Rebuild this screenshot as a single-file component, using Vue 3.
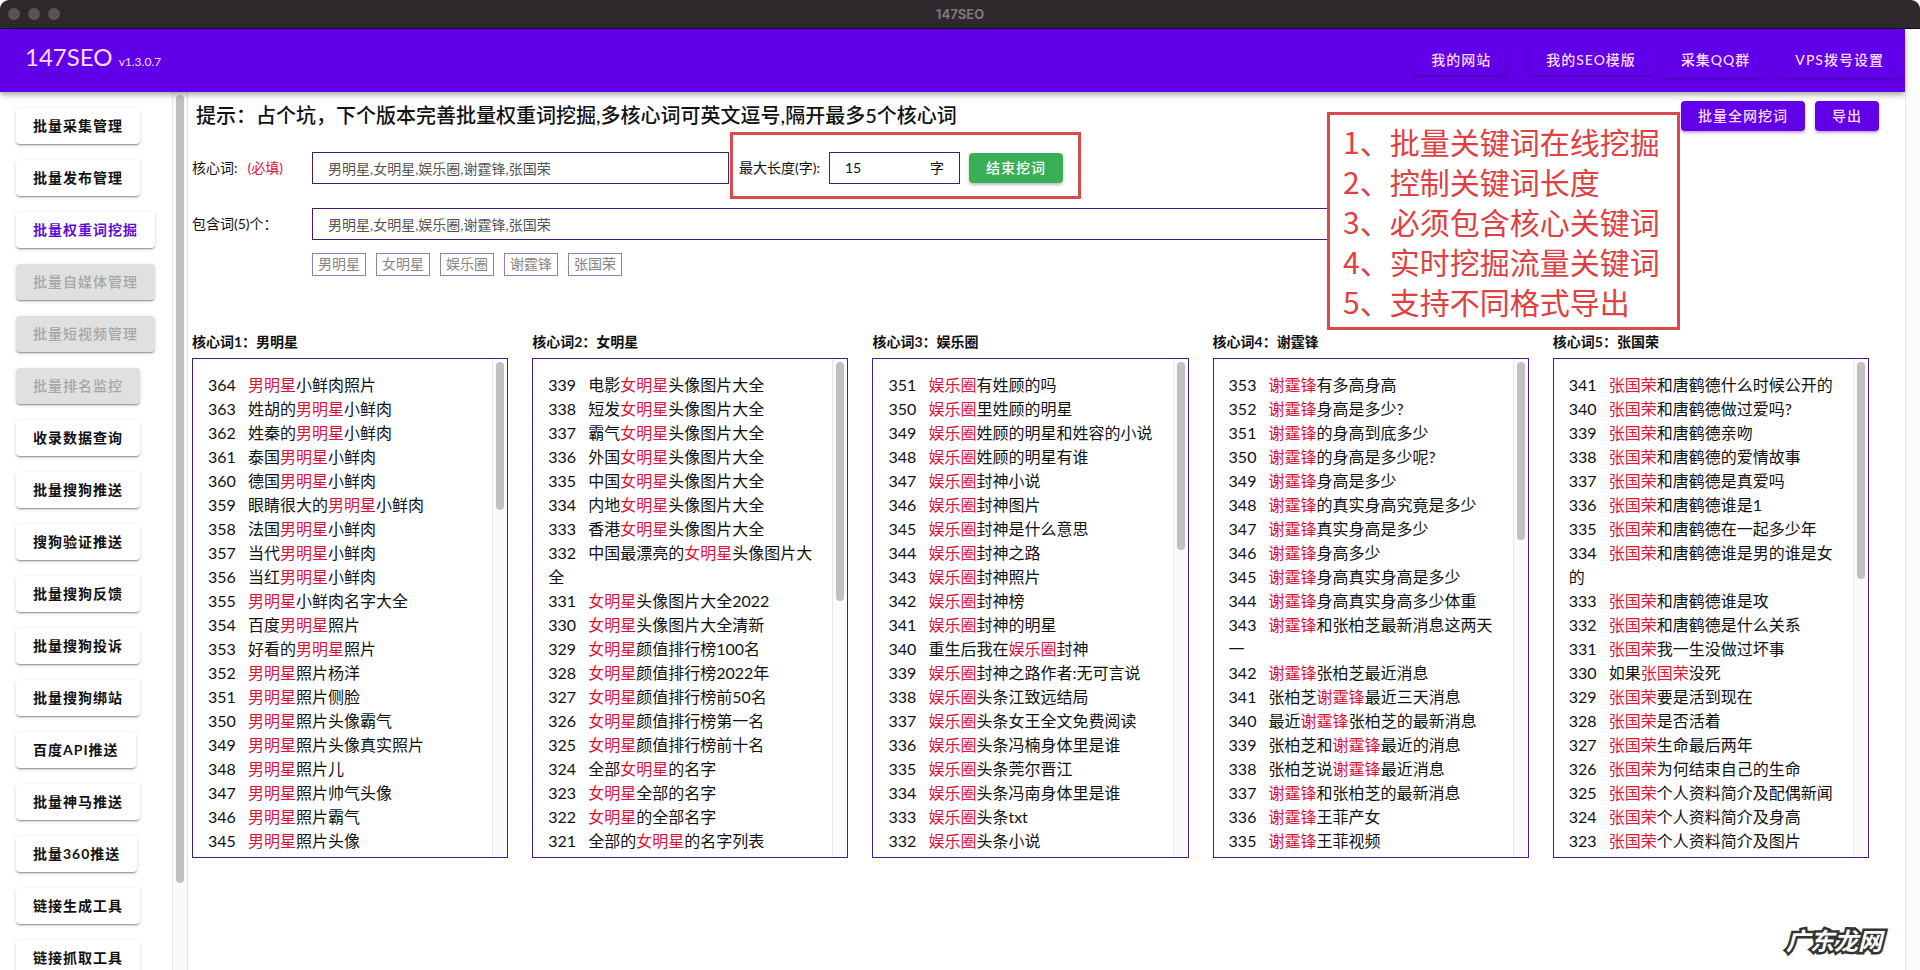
<script setup>
const navItems = [
  { label: '我的网站', kind: 'link wide-gap' },
  { label: '我的SEO模版', kind: 'link' },
  { label: '采集QQ群', kind: 'tall' },
  { label: 'VPS拨号设置', kind: 'tall' },
]

const sideItems = [
  { label: '批量采集管理' },
  { label: '批量发布管理' },
  { label: '批量权重词挖掘', active: true },
  { label: '批量自媒体管理', disabled: true },
  { label: '批量短视频管理', disabled: true },
  { label: '批量排名监控', disabled: true },
  { label: '收录数据查询' },
  { label: '批量搜狗推送' },
  { label: '搜狗验证推送' },
  { label: '批量搜狗反馈' },
  { label: '批量搜狗投诉' },
  { label: '批量搜狗绑站' },
  { label: '百度API推送' },
  { label: '批量神马推送' },
  { label: '批量360推送' },
  { label: '链接生成工具' },
  { label: '链接抓取工具' },
]

const keywords = ['男明星', '女明星', '娱乐圈', '谢霆锋', '张国荣']
const keywordText = keywords.join(',')

const notes = [
  '1、批量关键词在线挖掘',
  '2、控制关键词长度',
  '3、必须包含核心关键词',
  '4、实时挖掘流量关键词',
  '5、支持不同格式导出',
]

const sources = [
  {
    start: 364, thumb: 148,
    rows: ['男明星小鲜肉照片', '姓胡的男明星小鲜肉', '姓秦的男明星小鲜肉', '泰国男明星小鲜肉', '德国男明星小鲜肉', '眼睛很大的男明星小鲜肉', '法国男明星小鲜肉', '当代男明星小鲜肉', '当红男明星小鲜肉', '男明星小鲜肉名字大全', '百度男明星照片', '好看的男明星照片', '男明星照片杨洋', '男明星照片侧脸', '男明星照片头像霸气', '男明星照片头像真实照片', '男明星照片儿', '男明星照片帅气头像', '男明星照片霸气', '男明星照片头像'],
  },
  {
    start: 339, thumb: 239,
    rows: ['电影女明星头像图片大全', '短发女明星头像图片大全', '霸气女明星头像图片大全', '外国女明星头像图片大全', '中国女明星头像图片大全', '内地女明星头像图片大全', '香港女明星头像图片大全', '中国最漂亮的女明星头像图片大全', '女明星头像图片大全2022', '女明星头像图片大全清新', '女明星颜值排行榜100名', '女明星颜值排行榜2022年', '女明星颜值排行榜前50名', '女明星颜值排行榜第一名', '女明星颜值排行榜前十名', '全部女明星的名字', '女明星全部的名字', '女明星的全部名字', '全部的女明星的名字列表'],
  },
  {
    start: 351, thumb: 188,
    rows: ['娱乐圈有姓顾的吗', '娱乐圈里姓顾的明星', '娱乐圈姓顾的明星和姓容的小说', '娱乐圈姓顾的明星有谁', '娱乐圈封神小说', '娱乐圈封神图片', '娱乐圈封神是什么意思', '娱乐圈封神之路', '娱乐圈封神照片', '娱乐圈封神榜', '娱乐圈封神的明星', '重生后我在娱乐圈封神', '娱乐圈封神之路作者:无可言说', '娱乐圈头条江致远结局', '娱乐圈头条女王全文免费阅读', '娱乐圈头条冯楠身体里是谁', '娱乐圈头条莞尔晋江', '娱乐圈头条冯南身体里是谁', '娱乐圈头条txt', '娱乐圈头条小说'],
  },
  {
    start: 353, thumb: 178,
    rows: ['谢霆锋有多高身高', '谢霆锋身高是多少?', '谢霆锋的身高到底多少', '谢霆锋的身高是多少呢?', '谢霆锋身高是多少', '谢霆锋的真实身高究竟是多少', '谢霆锋真实身高是多少', '谢霆锋身高多少', '谢霆锋身高真实身高是多少', '谢霆锋身高真实身高多少体重', '谢霆锋和张柏芝最新消息这两天一', '谢霆锋张柏芝最近消息', '张柏芝谢霆锋最近三天消息', '最近谢霆锋张柏芝的最新消息', '张柏芝和谢霆锋最近的消息', '张柏芝说谢霆锋最近消息', '谢霆锋和张柏芝的最新消息', '谢霆锋王菲产女', '谢霆锋王菲视频'],
  },
  {
    start: 341, thumb: 217,
    rows: ['张国荣和唐鹤德什么时候公开的', '张国荣和唐鹤德做过爱吗?', '张国荣和唐鹤德亲吻', '张国荣和唐鹤德的爱情故事', '张国荣和唐鹤德是真爱吗', '张国荣和唐鹤德谁是1', '张国荣和唐鹤德在一起多少年', '张国荣和唐鹤德谁是男的谁是女的', '张国荣和唐鹤德谁是攻', '张国荣和唐鹤德是什么关系', '张国荣我一生没做过坏事', '如果张国荣没死', '张国荣要是活到现在', '张国荣是否活着', '张国荣生命最后两年', '张国荣为何结束自己的生命', '张国荣个人资料简介及配偶新闻', '张国荣个人资料简介及身高', '张国荣个人资料简介及图片'],
  },
]

const columns = sources.map((source, c) => ({
  keyword: keywords[c],
  thumb: source.thumb,
  rows: source.rows.map((text, i) => {
    const [before, after] = text.split(keywords[c])
    return { number: source.start - i, before, after }
  }),
}))
</script>

<template>
  <div class="window" lang="zh-CN">
    <div class="titlebar">
      <div class="lights"><i></i><i></i><i></i></div>
      <span class="window-title">147SEO</span>
    </div>

    <div class="page">
      <div class="app">
        <header class="header">
          <div class="brand">147SEO <small>v1.3.0.7</small></div>
          <nav class="nav">
            <button v-for="n in navItems" :key="n.label" type="button" :class="n.kind">{{ n.label }}</button>
          </nav>
        </header>

        <div class="body">
          <aside class="sidebar">
            <div class="menu">
              <button
                v-for="s in sideItems"
                :key="s.label"
                type="button"
                class="menu-button"
                :class="{ active: s.active }"
                :disabled="s.disabled"
              >{{ s.label }}</button>
            </div>
            <div class="track side-track"><div class="thumb"></div></div>
          </aside>

          <main class="main">
            <div class="top-row">
              <h1>提示：占个坑，下个版本完善批量权重词挖掘,多核心词可英文逗号,隔开最多5个核心词</h1>
              <div class="actions">
                <button type="button" class="primary">批量全网挖词</button>
                <button type="button" class="primary">导出</button>
              </div>
            </div>

            <form class="form" @submit.prevent>
              <div class="field">
                <label for="core">核心词:<span class="required">(必填)</span></label>
                <input id="core" class="box core" type="text" :value="keywordText" />
                <div class="limit">
                  <label for="max">最大长度(字):</label>
                  <div class="box unit-box">
                    <input id="max" type="text" value="15" />
                    <span>字</span>
                  </div>
                  <button type="button" class="stop">结束挖词</button>
                </div>
              </div>
              <div class="field">
                <label for="include">包含词(5)个：</label>
                <input id="include" class="box include" type="text" :value="keywordText" />
              </div>
              <div class="chips">
                <span v-for="k in keywords" :key="k">{{ k }}</span>
              </div>
            </form>

            <div class="columns">
              <section v-for="(col, c) in columns" :key="col.keyword">
                <h2>核心词{{ c + 1 }}：{{ col.keyword }}</h2>
                <div class="list">
                  <ul>
                    <li v-for="r in col.rows" :key="r.number"><span class="number">{{ r.number }}</span>{{ r.before }}<em>{{ col.keyword }}</em>{{ r.after }}</li>
                  </ul>
                  <div class="track"><div class="thumb" :style="{ height: col.thumb + 'px' }"></div></div>
                </div>
              </section>
            </div>

            <div class="note">
              <p v-for="n in notes" :key="n">{{ n }}</p>
            </div>
          </main>
        </div>
      </div>
      <div class="page-track"></div>
    </div>
    <div class="watermark">广东龙网</div>
  </div>
</template>

<style>
html {
  background: #fff;
}
</style>

<style scoped>
* {
  box-sizing: border-box;
}
.window {
  position: relative;
  display: flex;
  flex-direction: column;
  height: 100vh;
  overflow: hidden;
  background: #fff;
  color: #111;
  font: 14px/20px Lato, "Noto Sans CJK SC", sans-serif;
}
button,
input {
  font: inherit;
  color: inherit;
}
button {
  border: 0;
  border-radius: 4px;
  padding: 0 17px;
  font-weight: 500;
  letter-spacing: 1px;
  white-space: nowrap;
}
.titlebar {
  position: relative;
  display: flex;
  flex: none;
  align-items: center;
  justify-content: center;
  height: 29px;
  background: #2f282c;
  border-bottom: 1px solid #150a24;
  border-radius: 9px 9px 0 0;
}
.lights {
  position: absolute;
  left: 8px;
  display: flex;
  gap: 8px;
}
.lights i {
  width: 12px;
  height: 12px;
  border-radius: 50%;
  background: #5a5257;
}
.window-title {
  color: #7d767a;
  font: bold 13px/20px Inter, sans-serif;
}
.page {
  display: flex;
  flex: 1;
  min-height: 0;
}
.app {
  display: flex;
  flex: 1;
  flex-direction: column;
  min-width: 0;
}
.page-track {
  width: 15px;
  margin-top: 63px;
  border-left: 1px solid #e6e6e6;
  background: #fbfbfb;
}
.header {
  position: relative;
  z-index: 2;
  display: flex;
  flex: none;
  align-items: center;
  justify-content: space-between;
  height: 63px;
  padding: 0 4px 2px 25px;
  background: #6100e8;
  box-shadow: 0 2px 4px -1px rgba(0, 0, 0, 0.2), 0 4px 5px rgba(0, 0, 0, 0.14), 0 1px 10px rgba(0, 0, 0, 0.12);
  color: #fbdcff;
}
.brand {
  font-size: 24px;
  line-height: 32px;
}
.brand small {
  font-size: 12px;
}
.nav {
  display: flex;
  align-items: center;
  gap: 11px;
}
.nav button {
  background: transparent;
  box-shadow: 0 2px 3px rgba(30, 0, 90, 0.25), 0 0 3px rgba(30, 0, 90, 0.15);
}
.nav .link {
  height: 30px;
}
.nav .wide-gap {
  margin-right: 10px;
}
.nav .tall {
  height: 36px;
}
.body {
  display: flex;
  flex: 1;
  min-height: 0;
}
.sidebar {
  display: flex;
  flex: none;
  width: 188px;
  overflow: hidden;
}
.menu {
  display: flex;
  flex: 1;
  flex-direction: column;
  align-items: flex-start;
  gap: 16px;
  padding: 16px 0 0 16px;
}
.menu-button {
  flex: none;
  height: 36px;
  background: #fff;
  box-shadow: 0 2px 2px -1px rgba(0, 0, 0, 0.3), 0 1px 1px rgba(0, 0, 0, 0.14), 0 1px 4px rgba(0, 0, 0, 0.12);
  font-weight: 700;
}
.menu-button.active {
  color: #5f10d6;
}
.menu-button:disabled {
  background: #e0e0e0;
  color: #a6a6a6;
  font-weight: 500;
}
.track {
  flex: none;
  width: 15px;
  padding: 3px 3px 0;
  border-left: 1px solid #e8e8e8;
  background: #fafafa;
}
.thumb {
  width: 8px;
  border-radius: 4px;
  background: #c1c1c1;
}
.side-track {
  width: 16px;
  border-right: 1px solid #e0e0e0;
}
.side-track .thumb {
  height: 90%;
}
.main {
  position: relative;
  flex: 1;
  min-width: 0;
  padding: 9px 36px 0 4px;
}
.top-row {
  display: flex;
  align-items: flex-start;
  justify-content: space-between;
  margin-right: -10px;
}
h1 {
  margin: 0 0 0 4px;
  font-size: 20px;
  font-weight: 500;
  line-height: 28px;
}
.actions {
  display: flex;
  gap: 10px;
}
.primary {
  height: 30px;
  background: #6100e8;
  box-shadow: 0 2px 3px rgba(70, 0, 160, 0.35);
  color: #fbdcff;
}
.form {
  display: flex;
  flex-direction: column;
  gap: 24px;
  max-width: 1240px;
  margin-top: 21px;
}
.field {
  display: flex;
  align-items: center;
}
.field > label {
  flex: none;
  width: 120px;
}
.required {
  margin-left: 10px;
  color: #dc143c;
}
.box {
  height: 32px;
  border: 1px solid #4b1a73;
  border-radius: 0;
  background: #fff;
  padding: 0 15px;
  color: #555;
}
.core {
  width: 417px;
}
.include {
  flex: 1;
}
.limit {
  position: relative;
  display: flex;
  align-items: center;
  gap: 9px;
  margin-left: 10px;
}
.limit::after {
  content: "";
  position: absolute;
  inset: -20px -18px -15px -9px;
  border: 3px solid #db4a4b;
  pointer-events: none;
}
.unit-box {
  display: flex;
  align-items: center;
  width: 131px;
  color: #111;
}
.unit-box input {
  flex: 1;
  min-width: 0;
  border: 0;
  padding: 0;
  outline: 0;
}
.stop {
  height: 30px;
  background: #3aaf57;
  box-shadow: 0 2px 3px rgba(0, 0, 0, 0.25);
  color: #fff;
}
.chips {
  display: flex;
  gap: 10px;
  margin: -11px 0 0 120px;
}
.chips span {
  height: 23px;
  padding: 0 5px;
  border: 1px solid #9b7bb3;
  color: #858585;
  line-height: 20px;
}
.columns {
  display: grid;
  grid-template-columns: repeat(5, minmax(0, 1fr));
  gap: 24px;
  margin-top: 54px;
}
h2 {
  margin: 0 0 4px;
  font-size: 14px;
  font-weight: 700;
  line-height: 24px;
}
.list {
  display: flex;
  height: 500px;
  overflow: hidden;
  border: 1px solid #4b1a8b;
}
.list ul {
  flex: 1;
  min-width: 0;
  margin: 0;
  padding: 14px 16px 0 15px;
  list-style: none;
  font-size: 16px;
  line-height: 24px;
}
.number {
  display: inline-block;
  width: 40px;
}
.list em {
  color: #dc143c;
  font-style: normal;
}
.note {
  position: absolute;
  top: 20px;
  right: 225px;
  width: 353px;
  padding: 6px 13px;
  border: 3px solid #db4a4b;
  background: #fff;
  color: #e04042;
  font: 30px/40px "Noto Sans CJK SC", sans-serif;
}
.note p {
  margin: 0;
}
.watermark {
  position: absolute;
  right: 38px;
  bottom: 12px;
  color: #fff;
  font: italic bold 24px/36px "Noto Sans CJK SC", sans-serif;
  -webkit-text-stroke: 5px #333;
  paint-order: stroke fill;
}
</style>
